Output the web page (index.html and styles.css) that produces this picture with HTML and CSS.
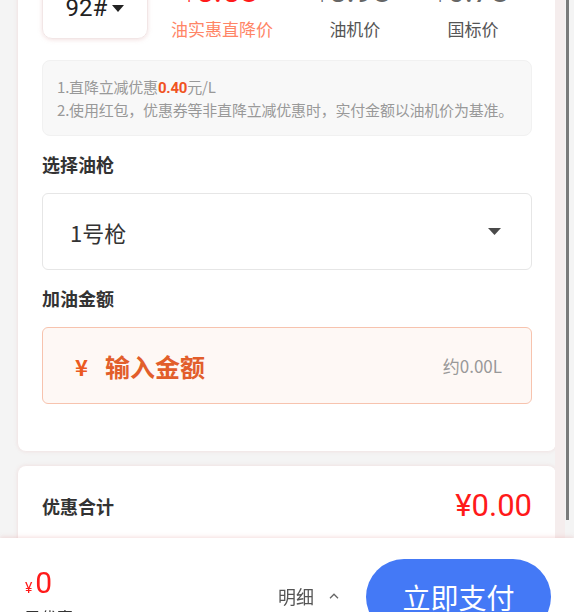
FILE: index.html
```html
<!DOCTYPE html>
<html>
<head>
    <title>加油支付</title>
    <link rel="stylesheet" href="styles.css">
</head>
<body>
<div class="page">
    <div class="card station">
        <div class="fuel-row">
            <div class="oil-box">
                <span class="oil-no">92#</span>
                <svg class="oil-arrow" width="12" height="7" viewBox="0 0 12 7"><path d="M0 0H12L6 7Z" fill="#222"/></svg>
            </div>
            <div class="prices">
                <div class="price-col">
                    <div class="price red"><span class="yen">¥</span>5.58</div>
                    <div class="price-label salmon">油实惠直降价</div>
                </div>
                <div class="price-col">
                    <div class="price"><span class="yen">¥</span>5.98</div>
                    <div class="price-label">油机价</div>
                </div>
                <div class="price-col">
                    <div class="price"><span class="yen">¥</span>6.78</div>
                    <div class="price-label">国标价</div>
                </div>
            </div>
        </div>

        <div class="notice">
            <div>1.直降立减优惠<b class="hl">0.40</b>元/L</div>
            <div>2.使用红包，优惠券等非直降立减优惠时，实付金额以油机价为基准。</div>
        </div>

        <div class="section-title">选择油枪</div>
        <div class="select">
            <span>1号枪</span>
            <svg width="13" height="7" viewBox="0 0 13 7"><path d="M0 0H13L6.5 7Z" fill="#4a4a4a"/></svg>
        </div>

        <div class="section-title">加油金额</div>
        <div class="amount">
            <span class="amount-yen">¥</span>
            <span class="amount-input">输入金额</span>
            <span class="liters">约0.00L</span>
        </div>
    </div>

    <div class="card discount">
        <span class="discount-title">优惠合计</span>
        <span class="discount-value">¥0.00</span>
    </div>
</div>

<div class="scroll-track"></div>
<div class="scroll-thumb"></div>

<div class="pay-bar">
    <div class="pay-total">
        <div class="total"><span class="total-yen">¥</span>0</div>
        <div class="saved">已优惠<span class="red">0.00</span></div>
    </div>
    <div class="detail">
        明细
        <svg width="10" height="6" viewBox="0 0 10 6"><path d="M1 5.2L5 1.2L9 5.2" fill="none" stroke="#666" stroke-width="1.3"/></svg>
    </div>
    <button class="pay-btn">立即支付</button>
</div>
</body>
</html>
```

FILE: styles.css
```css
body {
  margin: 0;
  background-color: #f4f4f4;
  font-family: "Noto Sans CJK SC", "Noto Sans", sans-serif;
  color: #333;
}

.page {
  padding: 0 18px 200px;
}

.card {
  background-color: #ffffff;
  border-radius: 8px;
  box-shadow: 0 0 4px rgba(225, 160, 160, 0.3);
}

.station {
  margin-top: -57px;
  padding: 24px 24px 47px;
}

.fuel-row {
  display: flex;
  align-items: flex-end;
}

.oil-box {
  box-sizing: border-box;
  width: 106px;
  height: 72px;
  margin-bottom: 1px;
  padding-bottom: 16px;
  display: flex;
  align-items: flex-end;
  justify-content: center;
  border: 1px solid #f2e6e6;
  border-radius: 10px;
  box-shadow: 0 1px 4px rgba(220, 170, 170, 0.35);
}

.oil-no {
  font-family: Roboto, sans-serif;
  font-size: 24px;
  line-height: 28px;
  color: #222;
}

.oil-arrow {
  margin: 0 0 10px 5px;
}

.prices {
  flex: 1;
  display: flex;
  justify-content: space-around;
}

.price-col {
  text-align: center;
}

.price {
  font-family: Roboto, sans-serif;
  font-size: 32px;
  line-height: 32px;
  margin-bottom: 11px;
  color: #666;
}

.yen {
  font-size: 13px;
  line-height: 1;
  margin-right: 3px;
}

.price.red {
  color: #ff1a1a;
}

.price-label {
  font-size: 17px;
  line-height: 22px;
  color: #555;
}

.price-label.salmon {
  color: #ff8566;
}

.notice {
  margin-top: 20px;
  padding: 15px 14px;
  background-color: #f8f8f8;
  border: 1px solid #f1f1f1;
  border-radius: 8px;
  font-size: 15px;
  line-height: 21px;
  letter-spacing: -0.2px;
  white-space: nowrap;
  color: #999;
}

.hl {
  color: #f0531f;
  font-family: Roboto, sans-serif;
  font-weight: 700;
}

.section-title {
  margin: 15px 0 16px;
  font-size: 18px;
  line-height: 26px;
  font-weight: 600;
  color: #333;
}

.select {
  box-sizing: border-box;
  height: 77px;
  padding: 0 30px 0 27px;
  display: flex;
  align-items: center;
  justify-content: space-between;
  border: 1px solid #e6e6e6;
  border-radius: 6px;
  font-size: 22px;
  color: #333;
}

.amount {
  box-sizing: border-box;
  height: 77px;
  padding: 0 29px 0 32px;
  display: flex;
  align-items: center;
  background-color: #fef8f5;
  border: 1px solid #f7c3ae;
  border-radius: 6px;
}

.amount-yen {
  font-size: 22px;
  font-weight: 700;
  color: #eb5a22;
}

.amount-input {
  margin-left: 17px;
  font-size: 25px;
  font-weight: 700;
  color: #e25e2b;
}

.liters {
  margin-left: auto;
  font-size: 17px;
  color: #999;
}

.discount {
  margin-top: 15px;
  padding: 25px 24px 40px;
  display: flex;
  align-items: center;
  justify-content: space-between;
}

.discount-title {
  font-size: 18px;
  line-height: 30px;
  font-weight: 600;
}

.discount-value {
  font-family: Roboto, sans-serif;
  font-size: 31px;
  line-height: 30px;
  color: #ff1a1a;
}

.scroll-track {
  position: fixed;
  top: 0;
  right: 9px;
  width: 10px;
  height: 538px;
  background-color: #f5eded;
}

.scroll-thumb {
  position: fixed;
  top: 0;
  right: 5px;
  width: 3px;
  height: 520px;
  background-color: #7a7a7a;
  z-index: 2;
}

.pay-bar {
  position: fixed;
  left: 0;
  right: 0;
  bottom: -40px;
  height: 114px;
  padding: 0 23px 0 25px;
  display: flex;
  align-items: flex-start;
  background-color: #ffffff;
  box-shadow: 0 -1px 4px rgba(225, 160, 160, 0.35);
}

.pay-total {
  margin-top: 27px;
}

.total {
  font-family: Roboto, sans-serif;
  font-size: 30px;
  line-height: 36px;
  color: #ff1a1a;
}

.total-yen {
  font-size: 14px;
  margin-right: 3px;
}

.saved {
  font-size: 16px;
  line-height: 22px;
  color: #333;
}

.red {
  color: #ff1a1a;
}

.detail {
  margin: 45px 0 0 auto;
  display: flex;
  align-items: center;
  gap: 15px;
  font-size: 18px;
  line-height: 26px;
  color: #555;
}

.pay-btn {
  margin: 21px 0 0 27px;
  width: 185px;
  height: 76px;
  border: 0;
  border-radius: 38px;
  background-color: #4479f6;
  color: #ffffff;
  font-family: "Noto Sans CJK SC", sans-serif;
  font-size: 28px;
}
```
